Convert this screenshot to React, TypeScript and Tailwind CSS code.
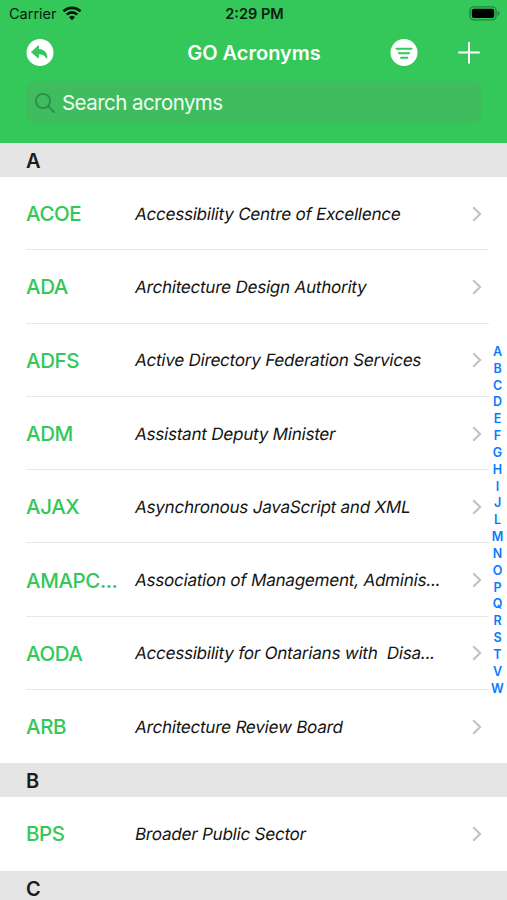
import React from 'react';

interface Acronym {
  short: string;
  meaning: string;
}

interface Section {
  letter: string;
  items: Acronym[];
}

const sections: Section[] = [
  {
    letter: 'A',
    items: [
      { short: 'ACOE', meaning: 'Accessibility Centre of Excellence' },
      { short: 'ADA', meaning: 'Architecture Design Authority' },
      { short: 'ADFS', meaning: 'Active Directory Federation Services' },
      { short: 'ADM', meaning: 'Assistant Deputy Minister' },
      { short: 'AJAX', meaning: 'Asynchronous JavaScript and XML' },
      { short: 'AMAPC...', meaning: 'Association of Management, Adminis...' },
      { short: 'AODA', meaning: 'Accessibility for Ontarians with  Disa...' },
      { short: 'ARB', meaning: 'Architecture Review Board' },
    ],
  },
  {
    letter: 'B',
    items: [{ short: 'BPS', meaning: 'Broader Public Sector' }],
  },
  { letter: 'C', items: [] },
];

const indexLetters = 'ABCDEFGHIJLMNOPQRSTVW'.split('');

const StatusBar: React.FC = () => (
  <div className="grid h-[27px] grid-cols-3 items-center pl-[9px] pr-[7px] text-[14.5px] text-[#07200e]">
    <div className="flex items-center gap-[5px]">
      <span>Carrier</span>
      <svg className="mb-px" width="20" height="15" viewBox="0 0 20 15" fill="none" stroke="#07150b">
        <path d="M1.5 5.4a12 12 0 0 1 17 0" strokeWidth="2.7" />
        <path d="M4.7 8.6a7.5 7.5 0 0 1 10.6 0" strokeWidth="2.6" />
        <path d="M10 14.2 7.1 11.2a4.1 4.1 0 0 1 5.8 0Z" fill="#07150b" stroke="none" />
      </svg>
    </div>
    <span className="text-center font-semibold">2:29 PM</span>
    <svg className="justify-self-end" width="31" height="15" viewBox="0 0 31 15">
      <rect x="0.9" y="0.9" width="26.2" height="13" rx="4" fill="none" stroke="#228540" strokeWidth="1.4" />
      <rect x="2.8" y="2.8" width="22.4" height="9.2" rx="2" fill="#000" />
      <path d="M28.6 5v4.8c1.2-.4 1.9-1.3 1.9-2.4s-.7-2-1.9-2.4Z" fill="#228540" />
    </svg>
  </div>
);

const NavBar: React.FC = () => (
  <div className="grid h-[51px] grid-cols-[1fr_auto_1fr] items-center pl-[27px] pr-[26px]">
    <svg className="-ml-px" width="28" height="28" viewBox="0 0 28 28">
      <circle cx="14" cy="13.5" r="13.5" fill="#fff" />
      <path
        d="M5.2 12.9 12 6.5c.5-.4.9-.2.9.4v3c5 .2 8.5 3.6 8.5 9 0 .9-.7 1-1.1.3-1.7-2.8-3.9-3.8-7.4-3.9v3.2c0 .7-.5.9-1 .4L5.2 13.5c-.2-.2-.2-.4 0-.6Z"
        fill="#34c759"
      />
    </svg>
    <h1 className="text-[20px] font-semibold text-white">GO Acronyms</h1>
    <div className="mr-px flex items-center gap-[40px] justify-self-end">
      <svg width="28" height="28" viewBox="0 0 28 28">
        <circle cx="14" cy="13.5" r="13.5" fill="#fff" />
        <path d="M6.5 9.8h15M8.9 14.2h10.2M11 18.7h6.4" stroke="#34c759" strokeWidth="1.9" strokeLinecap="round" />
      </svg>
      <svg width="22" height="22" viewBox="0 0 22 22">
        <path d="M11 .8v20M1 10.6h20" stroke="#fff" strokeWidth="2" strokeLinecap="round" />
      </svg>
    </div>
  </div>
);

const SearchField: React.FC = () => (
  <div className="mx-[26px] mt-[3px] flex h-[43px] w-[456px] items-center gap-[7px] rounded-[11px] bg-[#3fbc5d] pl-[9px]">
    <svg width="20" height="20" viewBox="0 0 20 20" fill="none" stroke="#2f8b49" strokeWidth="1.8" strokeLinecap="round">
      <circle cx="8" cy="8" r="7.1" />
      <path d="m13.2 13.2 5.8 5.8" />
    </svg>
    <span className="pt-px text-[20.5px] tracking-[-0.55px] text-[#eefcf1]">Search acronyms</span>
  </div>
);

const AcronymRow: React.FC<{ item: Acronym; last: boolean }> = ({ item, last }) => (
  <li className="ml-[26px] mr-[18px] flex h-[73.3px] flex-col">
    <div className="flex flex-1 items-center pt-px">
      <span className="w-[108px] shrink-0 pt-[1.5px] text-[20.5px] font-medium tracking-[-0.4px] text-[#34c759]">
        {item.short}
      </span>
      <span className="flex-1 whitespace-pre pt-[1.5px]">
        <span className="inline-block origin-[0_75%] -skew-x-10 text-[17px] tracking-[-0.21px] text-[#151515]">
          {item.meaning}
        </span>
      </span>
      <svg className="mr-[7px]" width="10" height="16" viewBox="0 0 10 16" fill="none" stroke="#c3c3c5" strokeWidth="2.2">
        <path d="m1.2 1.2 6.9 6.8-6.9 6.8" />
      </svg>
    </div>
    <div className={last ? 'h-px' : 'h-px bg-[#e8e8e9]'} />
  </li>
);

export default function App() {
  return (
    <div className="relative h-[900px] w-[507px] overflow-hidden bg-white font-['Inter',sans-serif]">
      <header className="h-[143px] bg-[#34c759]">
        <StatusBar />
        <NavBar />
        <SearchField />
      </header>

      <main>
        {sections.map((section) => (
          <section key={section.letter}>
            <h2 className="flex h-[34px] items-center bg-[#e5e5e5] pl-[26px] pt-[2px] text-[20px] font-semibold text-[#1c1c1c]">
              {section.letter}
            </h2>
            <ul>
              {section.items.map((item, i) => (
                <AcronymRow key={item.short} item={item} last={i === section.items.length - 1} />
              ))}
            </ul>
          </section>
        ))}
      </main>

      {/* section index floats over the list */}
      <nav className="absolute right-0 top-[344px] flex w-[19px] flex-col items-center text-[12.5px] font-semibold text-[#0a7aff]">
        {indexLetters.map((letter) => (
          <span key={letter} className="h-[16.83px] leading-[16.83px]">
            {letter}
          </span>
        ))}
      </nav>
    </div>
  );
}
